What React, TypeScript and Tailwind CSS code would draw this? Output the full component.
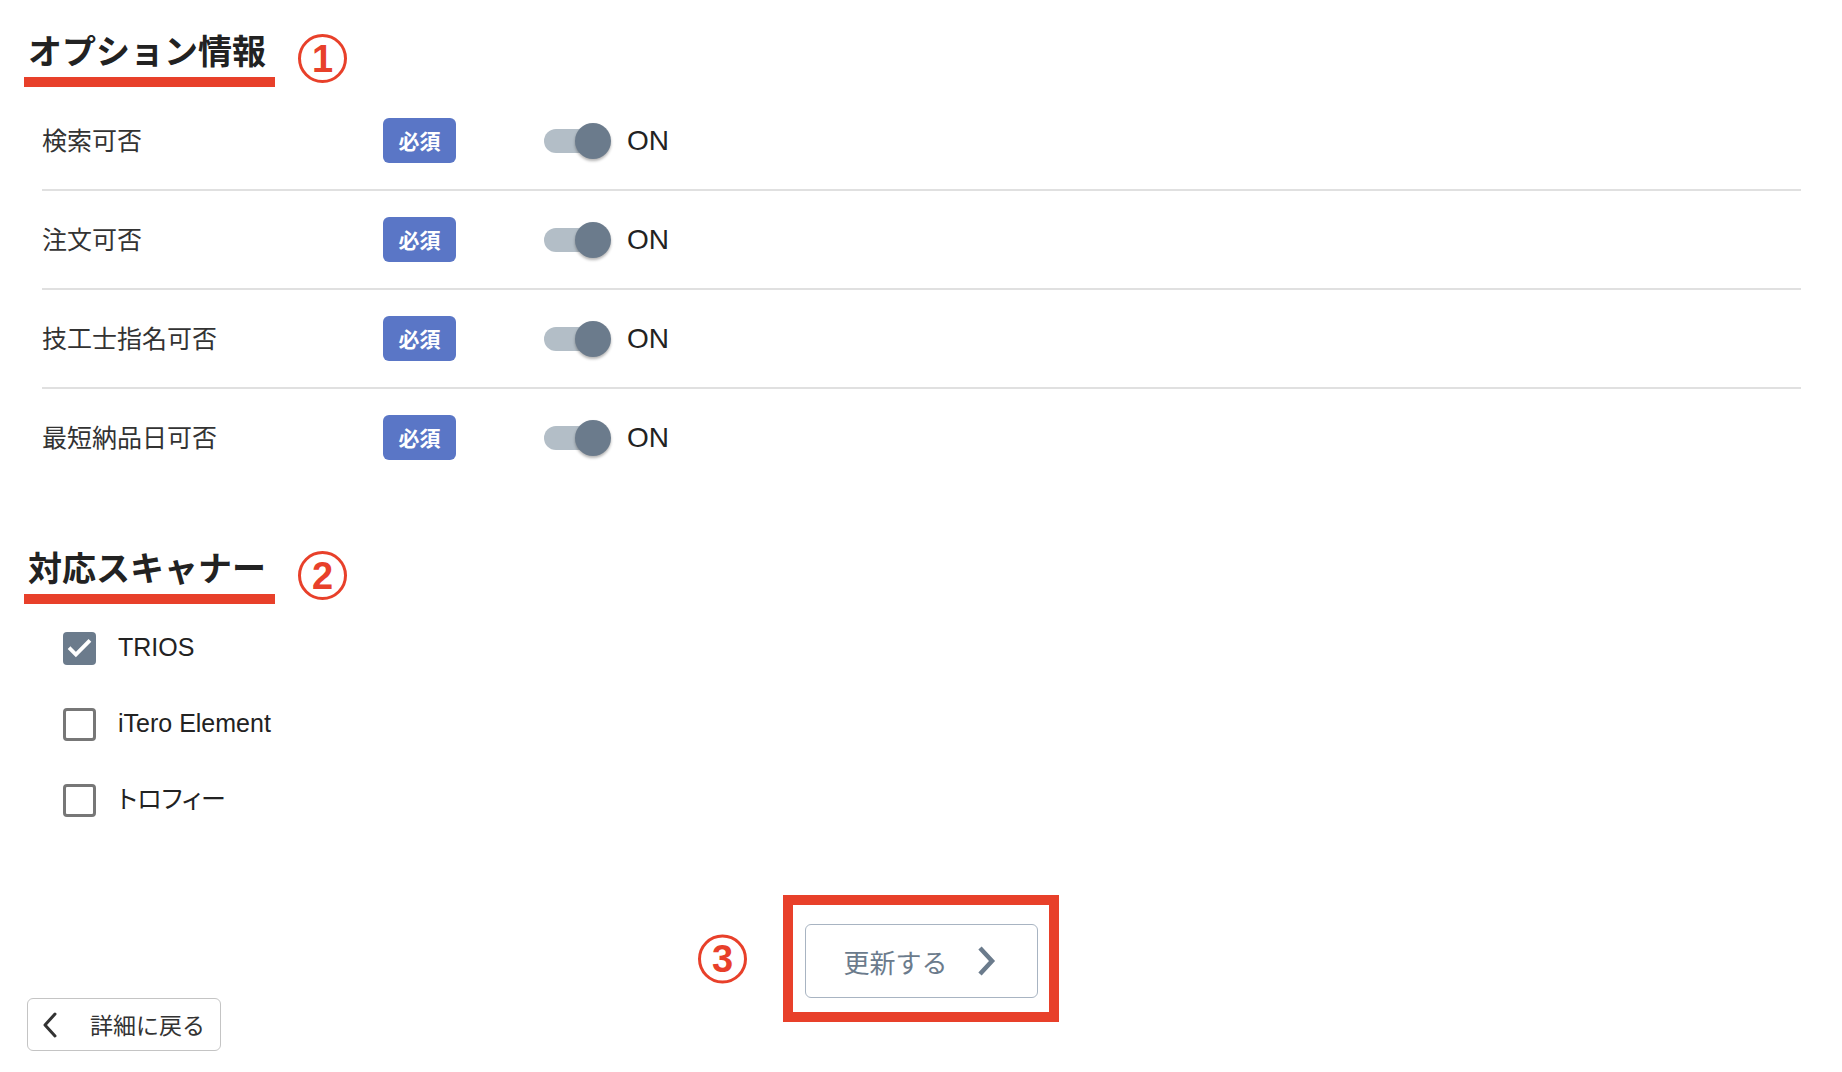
import { useState } from "react";

const JP = "font-['Noto_Sans_CJK_JP',sans-serif]";

const options = [
  { id: "search", label: "検索可否" },
  { id: "order", label: "注文可否" },
  { id: "technician", label: "技工士指名可否" },
  { id: "delivery", label: "最短納品日可否" },
];

const scanners = [
  { id: "trios", label: "TRIOS", checked: true },
  { id: "itero", label: "iTero Element", checked: false },
  { id: "trophy", label: "トロフィー", checked: false },
];

function Marker({ n }: { n: number }) {
  return (
    <div className="w-[49px] h-[49px] rounded-full border-[3px] border-[#e8402a] flex items-center justify-center text-[#e8402a] text-[38px] leading-none font-bold font-['Liberation_Sans',sans-serif]">
      {n}
    </div>
  );
}

function SectionTitle({ title, n }: { title: string; n: number }) {
  return (
    <div className="flex items-center gap-[23px] pl-[24px]">
      <h2
        className={`${JP} inline-block pl-1 pr-[9px] pb-[7px] border-b-[10px] border-[#e8402a] text-[34px] leading-[40px] font-bold text-[#222]`}
      >
        {title}
      </h2>
      <Marker n={n} />
    </div>
  );
}

function Toggle() {
  return (
    <div className="relative w-[67px] h-[36px] flex items-center">
      <div className="w-[61px] h-[24px] rounded-full bg-[#b3bec7]" />
      <div className="absolute right-0 top-0 w-[36px] h-[36px] rounded-full bg-[#6b7b8c] shadow-[0_2px_3px_rgba(0,0,0,0.3)]" />
    </div>
  );
}

export default function App() {
  const [checked, setChecked] = useState<Record<string, boolean>>(
    Object.fromEntries(scanners.map((s) => [s.id, s.checked]))
  );

  return (
    <div className="min-h-screen bg-white pt-[30px]">
      {/* Option info */}
      <SectionTitle title="オプション情報" n={1} />
      <div className="mt-[5px] ml-[42px] mr-[41px]">
        {options.map((opt) => (
          <div
            key={opt.id}
            className="flex items-center h-[99px] border-b-2 border-[#e0e0e0] last:border-b-0 last:h-[97px]"
          >
            <div className={`${JP} w-[341px] text-[25px] text-[#333] -mt-[2px]`}>
              {opt.label}
            </div>
            <span
              className={`${JP} w-[73px] h-[45px] rounded-[6px] bg-[#5a76c6] text-white text-[21px] font-bold flex items-center justify-center`}
            >
              必須
            </span>
            <div className="ml-[88px]">
              <Toggle />
            </div>
            <span className="ml-[16px] text-[28px] text-[#222] font-['Liberation_Sans',sans-serif]">
              ON
            </span>
          </div>
        ))}
      </div>

      {/* Scanners */}
      <div className="mt-[61px]">
        <SectionTitle title="対応スキャナー" n={2} />
      </div>
      <div className="mt-[6px] pl-[63px]">
        {scanners.map((s) => (
          <label
            key={s.id}
            className="flex items-center h-[76px] cursor-pointer"
            onClick={() => setChecked((c) => ({ ...c, [s.id]: !c[s.id] }))}
          >
            {checked[s.id] ? (
              <span className="w-[33px] h-[33px] rounded-[4px] bg-[#6b7b8c] flex items-center justify-center">
                <svg viewBox="0 0 24 24" className="w-[29px] h-[29px]" fill="none">
                  <path
                    d="M4.5 12.5l4.5 4.5 10.5-10.5"
                    stroke="white"
                    strokeWidth={3.2}
                    strokeLinecap="square"
                  />
                </svg>
              </span>
            ) : (
              <span className="w-[33px] h-[33px] rounded-[4px] border-[3px] border-[#777]" />
            )}
            <span className="ml-[22px] text-[25px] text-[#222] font-['Liberation_Sans','Noto_Sans_CJK_JP',sans-serif] [font-feature-settings:'palt']">
              {s.label}
            </span>
          </label>
        ))}
      </div>

      {/* Footer actions */}
      <div className="mt-[57px] h-[177px] grid grid-cols-[1fr_auto_1fr]">
        <div className="flex items-end pl-[27px] pb-[21px]">
          <button
            className={`${JP} w-[194px] h-[53px] border border-[#c4c4c4] rounded-[6px] bg-white flex items-center pl-[14px] text-[23px] text-[#333]`}
          >
            <svg viewBox="0 0 16 26" className="w-[16px] h-[26px]" fill="none">
              <path
                d="M13 2L3 13l10 11"
                stroke="#333"
                strokeWidth={3}
                strokeLinecap="round"
                strokeLinejoin="round"
              />
            </svg>
            <span className="ml-[32px]">詳細に戻る</span>
          </button>
        </div>
        <div className="relative self-start">
          <div className="absolute right-full mr-[36px] top-1/2 -translate-y-1/2">
            <Marker n={3} />
          </div>
          <div className="border-[10px] border-[#e8402a] pt-[19px] pr-[11px] pb-[14px] pl-[12px]">
            <button
              className={`${JP} w-[233px] h-[74px] border border-[#a8b4c2] rounded-[6px] bg-white flex items-center justify-center gap-[28px] text-[26px] text-[#6b7b8c]`}
            >
              <span className="-ml-[4px]">更新する</span>
              <svg viewBox="0 0 20 32" className="w-[20px] h-[32px]" fill="none">
                <path
                  d="M4 3l12 13L4 29"
                  stroke="#6b7b8c"
                  strokeWidth={4.5}
                  strokeLinejoin="miter"
                />
              </svg>
            </button>
          </div>
        </div>
        <div />
      </div>
    </div>
  );
}
